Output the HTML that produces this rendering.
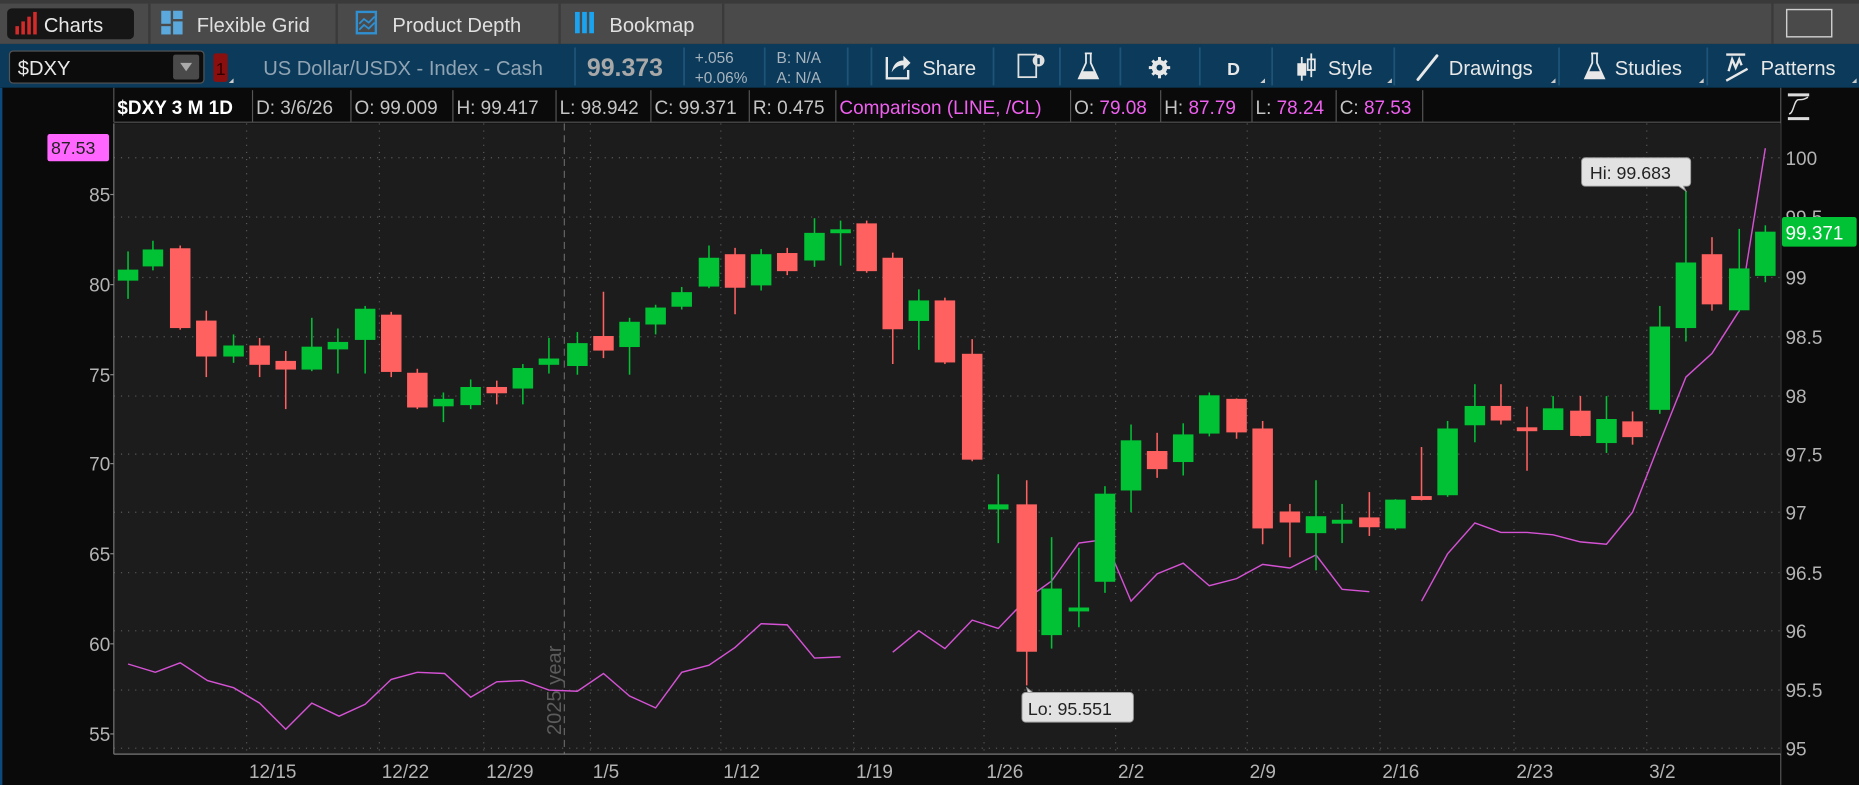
<!DOCTYPE html>
<html><head><meta charset="utf-8"><style>
html,body{margin:0;padding:0;background:#0a0a0a;overflow:hidden}
svg{display:block}
text{font-family:"Liberation Sans",sans-serif}
</style></head><body>
<svg width="1859" height="785" viewBox="0 0 1568 662" xmlns="http://www.w3.org/2000/svg">
<!-- tab bar -->
<rect x="0" y="0" width="1568" height="37" fill="#4a4a4a"/>
<rect x="0" y="0" width="1568" height="3" fill="#3a3a3a"/>
<rect x="6" y="7" width="107" height="26" rx="4" fill="#161616"/>
<g fill="#d42a2a"><rect x="13" y="22" width="3" height="7"/><rect x="18" y="18" width="3" height="11"/><rect x="23" y="14" width="3" height="15"/><rect x="28" y="10" width="3" height="19"/></g>
<text x="37" y="27" font-size="17" fill="#e8e8e8">Charts</text>
<line x1="126" y1="3" x2="126" y2="37" stroke="#3a3a3a" stroke-width="2"/>
<g fill="#5aa8dc"><rect x="136" y="9" width="8" height="11"/><rect x="146" y="9" width="8" height="7"/><rect x="146" y="18" width="8" height="11"/><rect x="136" y="22" width="8" height="7"/></g>
<text x="166" y="27" font-size="17" fill="#e0e0e0">Flexible Grid</text>
<line x1="284" y1="3" x2="284" y2="37" stroke="#3a3a3a" stroke-width="2"/>
<rect x="301" y="10" width="16" height="18" fill="none" stroke="#2f8fd0" stroke-width="2"/>
<path d="M303 20 l4-4 4 3 5-5 M303 25 l4-4 4 3 5-5" stroke="#2f8fd0" stroke-width="1.5" fill="none"/>
<text x="331" y="27" font-size="17" fill="#e0e0e0">Product Depth</text>
<line x1="472" y1="3" x2="472" y2="37" stroke="#3a3a3a" stroke-width="2"/>
<g fill="#1aa3f0"><rect x="485" y="10" width="4" height="18"/><rect x="491" y="10" width="4" height="18"/><rect x="497" y="10" width="4" height="18"/></g>
<text x="514" y="27" font-size="17" fill="#e0e0e0">Bookmap</text>
<line x1="610" y1="3" x2="610" y2="37" stroke="#3a3a3a" stroke-width="2"/>
<line x1="1495" y1="0" x2="1495" y2="37" stroke="#3a3a3a" stroke-width="2"/>
<rect x="1507" y="8" width="38" height="23" fill="none" stroke="#cfcfcf" stroke-width="1.2"/>
<!-- toolbar -->
<rect x="0" y="37" width="1568" height="37" fill="#0b3a5a"/>
<rect x="8" y="43" width="164" height="27" rx="3" fill="#0c0c0c" stroke="#555"/>
<text x="15" y="63" font-size="17" fill="#e8e8e8">$DXY</text>
<rect x="146" y="46" width="22" height="21" rx="2" fill="#4a4a4a"/>
<path d="M152 53 h10 l-5 7z" fill="#aaa"/>
<rect x="180" y="45" width="12" height="24" rx="2" fill="#8a1010"/>
<text x="182" y="63" font-size="15" fill="#300">1</text>
<path d="M193 70 l4-4 v4z" fill="#ccc"/>
<text x="222" y="63" font-size="17" fill="#90a4b4">US Dollar/USDX - Index - Cash</text>
<g stroke="#1e5478" stroke-width="1.5"><line x1="485" y1="40" x2="485" y2="72"/><line x1="577" y1="40" x2="577" y2="72"/><line x1="645" y1="40" x2="645" y2="72"/><line x1="715" y1="40" x2="715" y2="72"/><line x1="735" y1="40" x2="735" y2="72"/><line x1="838" y1="40" x2="838" y2="72"/><line x1="894" y1="40" x2="894" y2="72"/><line x1="945" y1="40" x2="945" y2="72"/><line x1="1012" y1="40" x2="1012" y2="72"/><line x1="1073" y1="40" x2="1073" y2="72"/><line x1="1176" y1="40" x2="1176" y2="72"/><line x1="1315" y1="40" x2="1315" y2="72"/><line x1="1440" y1="40" x2="1440" y2="72"/></g>
<text x="495" y="64" font-size="21" font-weight="bold" fill="#a8a8a8">99.373</text>
<text x="586" y="53" font-size="13" fill="#a8b4be">+.056</text>
<text x="586" y="70" font-size="13" fill="#a8b4be">+0.06%</text>
<text x="655" y="53" font-size="13" fill="#a8b4be">B: N/A</text>
<text x="655" y="70" font-size="13" fill="#a8b4be">A: N/A</text>
<path d="M748 48 v18 h18 v-7" stroke="#e8e8e8" stroke-width="2" fill="none"/>
<path d="M752 61 q2-10 10-10 v-4 l6 6 -6 6 v-4 q-6 0 -10 6z" fill="#e8e8e8"/>
<text x="778" y="63" font-size="17" fill="#e8e8e8">Share</text>
<rect x="859" y="46" width="15" height="19" fill="none" stroke="#e0e0e0" stroke-width="1.5"/><circle cx="876" cy="51" r="5" fill="#e0e0e0"/><rect x="875" y="49" width="2" height="5" fill="#0b3a5a"/>
<path d="M915 45 h6 M916 45 v8 l-6 13 h16 l-6-13 v-8" stroke="#e8e8e8" stroke-width="1.5" fill="none"/><path d="M912 60 h12 l2 6 h-16z" fill="#e8e8e8"/>
<circle cx="978" cy="57" r="5" fill="none" stroke="#e8e8e8" stroke-width="3"/><g stroke="#e8e8e8" stroke-width="2.5"><line x1="978" y1="48" x2="978" y2="66"/><line x1="969" y1="57" x2="987" y2="57"/><line x1="972" y1="51" x2="984" y2="63"/><line x1="984" y1="51" x2="972" y2="63"/></g><circle cx="978" cy="57" r="2.5" fill="#0b3a5a"/>
<text x="1035" y="63" font-size="15" font-weight="bold" fill="#e8e8e8">D</text>
<path d="M1063 70 l4-4 v4z M1170 70 l4-4 v4z M1308 70 l4-4 v4z M1433 70 l4-4 v4z M1562 70 l4-4 v4z" fill="#ccc"/>
<g stroke="#e8e8e8" stroke-width="1.5" fill="#e8e8e8"><line x1="1098" y1="48" x2="1098" y2="68"/><rect x="1095" y="54" width="6" height="9"/><line x1="1106" y1="45" x2="1106" y2="65"/><rect x="1103" y="50" width="6" height="9" fill="none"/></g>
<text x="1120" y="63" font-size="17" fill="#e8e8e8">Style</text>
<line x1="1196" y1="67" x2="1212" y2="47" stroke="#e8e8e8" stroke-width="2.5" stroke-linecap="round"/>
<text x="1222" y="63" font-size="17" fill="#e8e8e8">Drawings</text>
<path d="M1342 45 h6 M1343 45 v8 l-6 13 h16 l-6-13 v-8" stroke="#e8e8e8" stroke-width="1.5" fill="none"/><path d="M1339 60 h12 l2 6 h-16z" fill="#e8e8e8"/>
<text x="1362" y="63" font-size="17" fill="#e8e8e8">Studies</text>
<path d="M1456 46 h16 M1458 60 l3-10 3 7 3-7 2 5 M1456 68 l18-10" stroke="#e8e8e8" stroke-width="2" fill="none"/>
<text x="1485" y="63" font-size="17" fill="#e8e8e8">Patterns</text>
<!-- info bar -->
<rect x="0" y="74" width="1568" height="29" fill="#0a0a0a"/>
<rect x="0" y="74" width="2" height="588" fill="#0b4a7a"/>
<g stroke="#555" stroke-width="1"><line x1="96" y1="74" x2="96" y2="103"/><line x1="213" y1="76" x2="213" y2="103"/><line x1="296" y1="76" x2="296" y2="103"/><line x1="382" y1="76" x2="382" y2="103"/><line x1="469" y1="76" x2="469" y2="103"/><line x1="549" y1="76" x2="549" y2="103"/><line x1="632" y1="76" x2="632" y2="103"/><line x1="705" y1="76" x2="705" y2="103"/><line x1="903" y1="76" x2="903" y2="103"/><line x1="979" y1="76" x2="979" y2="103"/><line x1="1056" y1="76" x2="1056" y2="103"/><line x1="1127" y1="76" x2="1127" y2="103"/><line x1="1200" y1="76" x2="1200" y2="103"/><line x1="96" y1="103" x2="1502" y2="103"/><line x1="1502" y1="74" x2="1502" y2="662"/></g>
<g font-size="16">
<text x="99" y="96" font-weight="bold" fill="#fff">$DXY 3 M 1D</text>
<text x="216" y="96" fill="#c4c4c4">D: 3/6/26</text>
<text x="299" y="96" fill="#c4c4c4">O: 99.009</text>
<text x="385" y="96" fill="#c4c4c4">H: 99.417</text>
<text x="472" y="96" fill="#c4c4c4">L: 98.942</text>
<text x="552" y="96" fill="#c4c4c4">C: 99.371</text>
<text x="635" y="96" fill="#c4c4c4">R: 0.475</text>
<text x="708" y="96" fill="#f060f0">Comparison (LINE, /CL)</text>
<text x="906" y="96" fill="#c4c4c4">O: <tspan fill="#f060f0">79.08</tspan></text>
<text x="982" y="96" fill="#c4c4c4">H: <tspan fill="#f060f0">87.79</tspan></text>
<text x="1059" y="96" fill="#c4c4c4">L: <tspan fill="#f060f0">78.24</tspan></text>
<text x="1130" y="96" fill="#c4c4c4">C: <tspan fill="#f060f0">87.53</tspan></text>
</g>
<path d="M1508 80 h18 M1508 100 h18" stroke="#ddd" stroke-width="2.5"/>
<path d="M1509 96 c4 0 4-12 8-12 s4 0 8-2" stroke="#ddd" stroke-width="1.2" fill="none"/>
<!-- chart -->
<rect x="96" y="104" width="1406" height="532" fill="#1c1c1c"/>
<g stroke="#5a5a5a" stroke-width="1" stroke-dasharray="1,5">
<line x1="96" y1="133" x2="1502" y2="133"/><line x1="96" y1="183" x2="1502" y2="183"/><line x1="96" y1="234" x2="1502" y2="234"/><line x1="96" y1="284" x2="1502" y2="284"/><line x1="96" y1="334" x2="1502" y2="334"/><line x1="96" y1="383" x2="1502" y2="383"/><line x1="96" y1="432" x2="1502" y2="432"/><line x1="96" y1="483" x2="1502" y2="483"/><line x1="96" y1="532" x2="1502" y2="532"/><line x1="96" y1="582" x2="1502" y2="582"/><line x1="96" y1="631" x2="1502" y2="631"/>
<line x1="208" y1="104" x2="208" y2="636"/><line x1="320" y1="104" x2="320" y2="636"/><line x1="408" y1="104" x2="408" y2="636"/><line x1="498" y1="104" x2="498" y2="636"/><line x1="608" y1="104" x2="608" y2="636"/><line x1="720" y1="104" x2="720" y2="636"/><line x1="830" y1="104" x2="830" y2="636"/><line x1="941" y1="104" x2="941" y2="636"/><line x1="1052" y1="104" x2="1052" y2="636"/><line x1="1164" y1="104" x2="1164" y2="636"/><line x1="1277" y1="104" x2="1277" y2="636"/><line x1="1389" y1="104" x2="1389" y2="636"/>
</g>
<line x1="476" y1="104" x2="476" y2="636" stroke="#666" stroke-dasharray="6,4"/>
<text transform="translate(473,620) rotate(-90)" font-size="17" fill="#5c5c5c">2025 year</text>
<line x1="96" y1="636" x2="1502" y2="636" stroke="#777"/>
<line x1="96" y1="104" x2="96" y2="636" stroke="#777"/>
<!-- axes labels -->
<g font-size="16" fill="#b4b4b4" text-anchor="end">
<text x="93" y="170">85</text><text x="93" y="246">80</text><text x="93" y="322">75</text><text x="93" y="397">70</text><text x="93" y="473">65</text><text x="93" y="549">60</text><text x="93" y="625">55</text>
</g>
<g stroke="#888"><line x1="93" y1="164" x2="96" y2="164"/><line x1="93" y1="240" x2="96" y2="240"/><line x1="93" y1="316" x2="96" y2="316"/><line x1="93" y1="391" x2="96" y2="391"/><line x1="93" y1="467" x2="96" y2="467"/><line x1="93" y1="543" x2="96" y2="543"/><line x1="93" y1="619" x2="96" y2="619"/></g>
<g font-size="16" fill="#b4b4b4">
<text x="1506" y="139">100</text><text x="1506" y="189">99.5</text><text x="1506" y="240">99</text><text x="1506" y="290">98.5</text><text x="1506" y="340">98</text><text x="1506" y="389">97.5</text><text x="1506" y="438">97</text><text x="1506" y="489">96.5</text><text x="1506" y="538">96</text><text x="1506" y="588">95.5</text><text x="1506" y="637">95</text>
</g>
<g font-size="16" fill="#b4b4b4">
<text x="210" y="656">12/15</text><text x="322" y="656">12/22</text><text x="410" y="656">12/29</text><text x="500" y="656">1/5</text><text x="610" y="656">1/12</text><text x="722" y="656">1/19</text><text x="832" y="656">1/26</text><text x="943" y="656">2/2</text><text x="1054" y="656">2/9</text><text x="1166" y="656">2/16</text><text x="1279" y="656">2/23</text><text x="1391" y="656">3/2</text>
</g>
<!-- comparison line -->
<g fill="none" stroke="#d552d5" stroke-width="1.2">
<polyline points="108,560 131,567 152,559 175,574 197,580 219,593 241,615 263,593 286,604 308,594 330,573 352,567 375,568 397,588 419,575 441,574 463,582 487,583 509,568 531,587 553,597 575,567 598,561 620,546 642,526 664,527 687,555 709,554"/>
<polyline points="753,550 775,532 797,547 820,523 842,530 866,505 887,490 910,458 932,455 954,507 976,484 998,475 1020,494 1043,488 1065,476 1088,479 1110,468 1132,497 1155,499"/>
<polyline points="1199,507 1221,467 1244,441 1266,449 1288,449 1310,451 1333,457 1355,459 1377,432 1400,373 1422,318 1444,298 1467,262 1489,125"/>
</g>
<!-- candles -->
<g stroke-width="1.3">
<g stroke="#00c234" fill="#00c234">
<line x1="108" y1="212" x2="108" y2="252"/><rect x="100" y="228" width="16" height="8"/>
<line x1="129" y1="203" x2="129" y2="228"/><rect x="121" y="211" width="16" height="13"/>
<line x1="197" y1="282" x2="197" y2="306"/><rect x="189" y="292" width="16" height="8"/>
<line x1="263" y1="268" x2="263" y2="313"/><rect x="255" y="293" width="16" height="18"/>
<line x1="285" y1="277" x2="285" y2="315"/><rect x="277" y="289" width="16" height="5"/>
<line x1="308" y1="258" x2="308" y2="315"/><rect x="300" y="261" width="16" height="25"/>
<line x1="374" y1="331" x2="374" y2="356"/><rect x="366" y="337" width="16" height="5"/>
<line x1="397" y1="320" x2="397" y2="345"/><rect x="389" y="327" width="16" height="14"/>
<line x1="441" y1="307" x2="441" y2="341"/><rect x="433" y="311" width="16" height="16"/>
<line x1="463" y1="285" x2="463" y2="315"/><rect x="455" y="303" width="16" height="4"/>
<line x1="487" y1="280" x2="487" y2="316"/><rect x="479" y="290" width="16" height="18"/>
<line x1="531" y1="268" x2="531" y2="316"/><rect x="523" y="272" width="16" height="20"/>
<line x1="553" y1="257" x2="553" y2="282"/><rect x="545" y="260" width="16" height="13"/>
<line x1="575" y1="242" x2="575" y2="261"/><rect x="567" y="247" width="16" height="11"/>
<line x1="598" y1="207" x2="598" y2="243"/><rect x="590" y="218" width="16" height="23"/>
<line x1="642" y1="210" x2="642" y2="245"/><rect x="634" y="215" width="16" height="25"/>
<line x1="687" y1="184" x2="687" y2="225"/><rect x="679" y="197" width="16" height="22"/>
<line x1="709" y1="186" x2="709" y2="224"/><rect x="701" y="194" width="16" height="2"/>
<line x1="775" y1="244" x2="775" y2="295"/><rect x="767" y="254" width="16" height="16"/>
<line x1="842" y1="400" x2="842" y2="458"/><rect x="834" y="426" width="16" height="3"/>
<line x1="887" y1="453" x2="887" y2="547"/><rect x="879" y="497" width="16" height="38"/>
<line x1="910" y1="462" x2="910" y2="529"/><rect x="902" y="513" width="16" height="2"/>
<line x1="932" y1="410" x2="932" y2="500"/><rect x="924" y="417" width="16" height="73"/>
<line x1="954" y1="358" x2="954" y2="432"/><rect x="946" y="372" width="16" height="41"/>
<line x1="998" y1="357" x2="998" y2="401"/><rect x="990" y="367" width="16" height="22"/>
<line x1="1020" y1="331" x2="1020" y2="368"/><rect x="1012" y="334" width="16" height="31"/>
<line x1="1110" y1="405" x2="1110" y2="481"/><rect x="1102" y="436" width="16" height="13"/>
<line x1="1132" y1="425" x2="1132" y2="458"/><rect x="1124" y="439" width="16" height="2"/>
<line x1="1177" y1="421" x2="1177" y2="447"/><rect x="1169" y="422" width="16" height="23"/>
<line x1="1221" y1="355" x2="1221" y2="419"/><rect x="1213" y="362" width="16" height="55"/>
<line x1="1244" y1="324" x2="1244" y2="373"/><rect x="1236" y="343" width="16" height="15"/>
<line x1="1310" y1="334" x2="1310" y2="362"/><rect x="1302" y="345" width="16" height="17"/>
<line x1="1355" y1="334" x2="1355" y2="382"/><rect x="1347" y="354" width="16" height="19"/>
<line x1="1400" y1="258" x2="1400" y2="349"/><rect x="1392" y="276" width="16" height="69"/>
<line x1="1422" y1="161" x2="1422" y2="288"/><rect x="1414" y="222" width="16" height="54"/>
<line x1="1467" y1="193" x2="1467" y2="263"/><rect x="1459" y="227" width="16" height="34"/>
<line x1="1489" y1="190" x2="1489" y2="238"/><rect x="1481" y="196" width="16" height="36"/>
</g>
<g stroke="#ff6060" fill="#ff6060">
<line x1="152" y1="207" x2="152" y2="278"/><rect x="144" y="210" width="16" height="66"/>
<line x1="174" y1="262" x2="174" y2="318"/><rect x="166" y="271" width="16" height="29"/>
<line x1="219" y1="285" x2="219" y2="318"/><rect x="211" y="292" width="16" height="15"/>
<line x1="241" y1="296" x2="241" y2="345"/><rect x="233" y="305" width="16" height="6"/>
<line x1="330" y1="263" x2="330" y2="318"/><rect x="322" y="266" width="16" height="47"/>
<line x1="352" y1="311" x2="352" y2="345"/><rect x="344" y="315" width="16" height="28"/>
<line x1="419" y1="321" x2="419" y2="341"/><rect x="411" y="327" width="16" height="4"/>
<line x1="509" y1="246" x2="509" y2="302"/><rect x="501" y="284" width="16" height="11"/>
<line x1="620" y1="209" x2="620" y2="265"/><rect x="612" y="215" width="16" height="27"/>
<line x1="664" y1="209" x2="664" y2="232"/><rect x="656" y="214" width="16" height="14"/>
<line x1="731" y1="186" x2="731" y2="230"/><rect x="723" y="189" width="16" height="39"/>
<line x1="753" y1="213" x2="753" y2="307"/><rect x="745" y="218" width="16" height="59"/>
<line x1="797" y1="251" x2="797" y2="307"/><rect x="789" y="254" width="16" height="51"/>
<line x1="820" y1="286" x2="820" y2="389"/><rect x="812" y="299" width="16" height="88"/>
<line x1="866" y1="405" x2="866" y2="578"/><rect x="858" y="426" width="16" height="123"/>
<line x1="976" y1="365" x2="976" y2="403"/><rect x="968" y="381" width="16" height="14"/>
<line x1="1043" y1="336" x2="1043" y2="370"/><rect x="1035" y="337" width="16" height="27"/>
<line x1="1065" y1="355" x2="1065" y2="459"/><rect x="1057" y="362" width="16" height="83"/>
<line x1="1088" y1="425" x2="1088" y2="470"/><rect x="1080" y="432" width="16" height="8"/>
<line x1="1155" y1="415" x2="1155" y2="452"/><rect x="1147" y="437" width="16" height="7"/>
<line x1="1199" y1="377" x2="1199" y2="422"/><rect x="1191" y="419" width="16" height="2"/>
<line x1="1266" y1="324" x2="1266" y2="358"/><rect x="1258" y="343" width="16" height="11"/>
<line x1="1288" y1="343" x2="1288" y2="397"/><rect x="1280" y="361" width="16" height="2"/>
<line x1="1333" y1="334" x2="1333" y2="368"/><rect x="1325" y="347" width="16" height="20"/>
<line x1="1377" y1="347" x2="1377" y2="375"/><rect x="1369" y="356" width="16" height="12"/>
<line x1="1444" y1="200" x2="1444" y2="262"/><rect x="1436" y="215" width="16" height="41"/>
</g>
</g>
<!-- Hi / Lo labels -->
<path d="M1337 133 h86 a3 3 0 0 1 3 3 v18 a3 3 0 0 1 -3 3 h-3 l2 4 -6 -4 h-79 a3 3 0 0 1 -3 -3 v-18 a3 3 0 0 1 3 -3z" fill="#e2e2e2" stroke="#999" stroke-width="0.8"/>
<text x="1341" y="151" font-size="15" fill="#222">Hi: 99.683</text>
<path d="M865 584 h88 a3 3 0 0 1 3 3 v19 a3 3 0 0 1 -3 3 h-88 a3 3 0 0 1 -3 -3 v-19 a3 3 0 0 1 3 -3 h2 l-1 -4 5 4z" fill="#e2e2e2" stroke="#999" stroke-width="0.8"/>
<text x="867" y="603" font-size="15" fill="#222">Lo: 95.551</text>
<!-- price labels -->
<rect x="1503" y="183" width="63" height="25" rx="2" fill="#00c234"/>
<text x="1506" y="202" font-size="16" fill="#fff">99.371</text>
<rect x="40" y="113" width="52" height="23" rx="2" fill="#ff66ff"/>
<text x="43" y="130" font-size="15" fill="#222">87.53</text>
</svg>
</body></html>
